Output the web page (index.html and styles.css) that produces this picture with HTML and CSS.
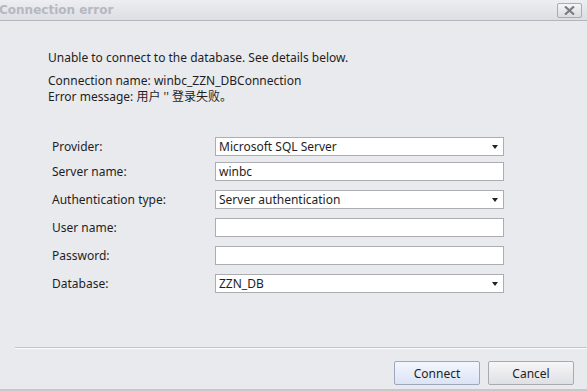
FILE: index.html
```html
<!DOCTYPE html>
<html lang="en">
<head>
    <meta charset="UTF-8">
    <title>Connection error</title>
    <link rel="stylesheet" href="styles.css">
</head>
<body>
    <div class="dialog">
        <div class="title-bar">
            <span class="title">Connection error</span>
            <button class="close-btn" aria-label="Close">
                <svg width="11" height="9" viewBox="0 0 11 9">
                    <path d="M1 0.5 L10 8.5 M10 0.5 L1 8.5" stroke="#7a7c82" stroke-width="2.2"/>
                </svg>
            </button>
        </div>

        <div class="content">
            <p class="lead">Unable to connect to the database. See details below.</p>
            <div class="details">
                <div>Connection name: winbc_ZZN_DBConnection</div>
                <div>Error message: 用户 '' 登录失败。</div>
            </div>

            <div class="form">
                <div class="row first">
                    <label>Provider:</label>
                    <div class="field combo">Microsoft SQL Server<span class="arrow"></span></div>
                </div>
                <div class="row second">
                    <label>Server name:</label>
                    <div class="field">winbc</div>
                </div>
                <div class="row">
                    <label>Authentication type:</label>
                    <div class="field combo">Server authentication<span class="arrow"></span></div>
                </div>
                <div class="row">
                    <label>User name:</label>
                    <div class="field"></div>
                </div>
                <div class="row">
                    <label>Password:</label>
                    <div class="field"></div>
                </div>
                <div class="row">
                    <label>Database:</label>
                    <div class="field combo">ZZN_DB<span class="arrow"></span></div>
                </div>
            </div>
        </div>

        <div class="footer">
            <button class="btn primary">Connect</button>
            <button class="btn">Cancel</button>
        </div>
    </div>
</body>
</html>
```

FILE: styles.css
```css
body {
    margin: 0;
    font-family: 'Noto Sans', 'Noto Sans CJK SC', sans-serif;
    font-size: 12px;
    color: #1e1e1e;
    background: #e9eaee;
}

.dialog {
    width: 587px;
    height: 391px;
    display: flex;
    flex-direction: column;
    background: #e9eaee;
    overflow: hidden;
}

.title-bar {
    height: 21px;
    display: flex;
    align-items: center;
    justify-content: space-between;
    background: linear-gradient(#eceef2, #dcdee3);
    border-bottom: 1px solid #b4b6bb;
    box-sizing: border-box;
    padding: 0 5px 1px 0;
}

.title {
    margin-left: -1px;
    font-family: 'DejaVu Sans', sans-serif;
    font-weight: bold;
    font-size: 12px;
    color: #b5b8c0;
}

.close-btn {
    width: 25px;
    height: 15px;
    padding: 0;
    margin-top: 1px;
    display: flex;
    align-items: center;
    justify-content: center;
    border: 1px solid #a9abb0;
    border-radius: 2px;
    background: linear-gradient(#f4f5f7, #dadce0);
}

.content {
    flex: 1;
    padding: 0 83px 0 48px;
}

.lead {
    margin: 29px 0 0;
    line-height: 16px;
}

.details {
    margin: 7px 0 0;
    line-height: 16px;
}

.form {
    margin-top: 32px;
    margin-left: 4px;
}

.row {
    display: flex;
    align-items: center;
    height: 19px;
    margin-top: 9px;
}

.row.first {
    margin-top: 0;
}

.row.second {
    margin-top: 6px;
}

.row label {
    width: 163px;
}

.field {
    position: relative;
    flex: 1;
    height: 19px;
    box-sizing: border-box;
    border: 1px solid #abadb3;
    background: #fff;
    padding: 0 3px;
    line-height: 17px;
}

.arrow {
    position: absolute;
    right: 5px;
    top: 7px;
    border-left: 3.5px solid transparent;
    border-right: 3.5px solid transparent;
    border-top: 4px solid #222;
}

.footer {
    height: 44px;
    margin-left: 15px;
    border-top: 1px solid #c2c4c8;
    box-shadow: inset 0 1px 0 #fafbfc;
    display: flex;
    justify-content: flex-end;
    align-items: flex-start;
    gap: 8px;
    padding: 13px 13px 0 0;
    box-sizing: border-box;
    position: relative;
}

.footer::after {
    content: "";
    position: absolute;
    left: -15px;
    right: 0;
    bottom: 0;
    border-bottom: 2px solid #c7c8cc;
}

.btn {
    width: 86px;
    height: 24px;
    font-family: 'Noto Sans', sans-serif;
    font-size: 12px;
    color: #1e1e1e;
    border: 1px solid #a8aaaf;
    border-radius: 2px;
    background: linear-gradient(#f6f6f8, #dfe0e4);
}

.btn.primary {
    border-color: #9ea8bd;
    background: linear-gradient(#f3f6fd, #dbe3f5);
}
```
